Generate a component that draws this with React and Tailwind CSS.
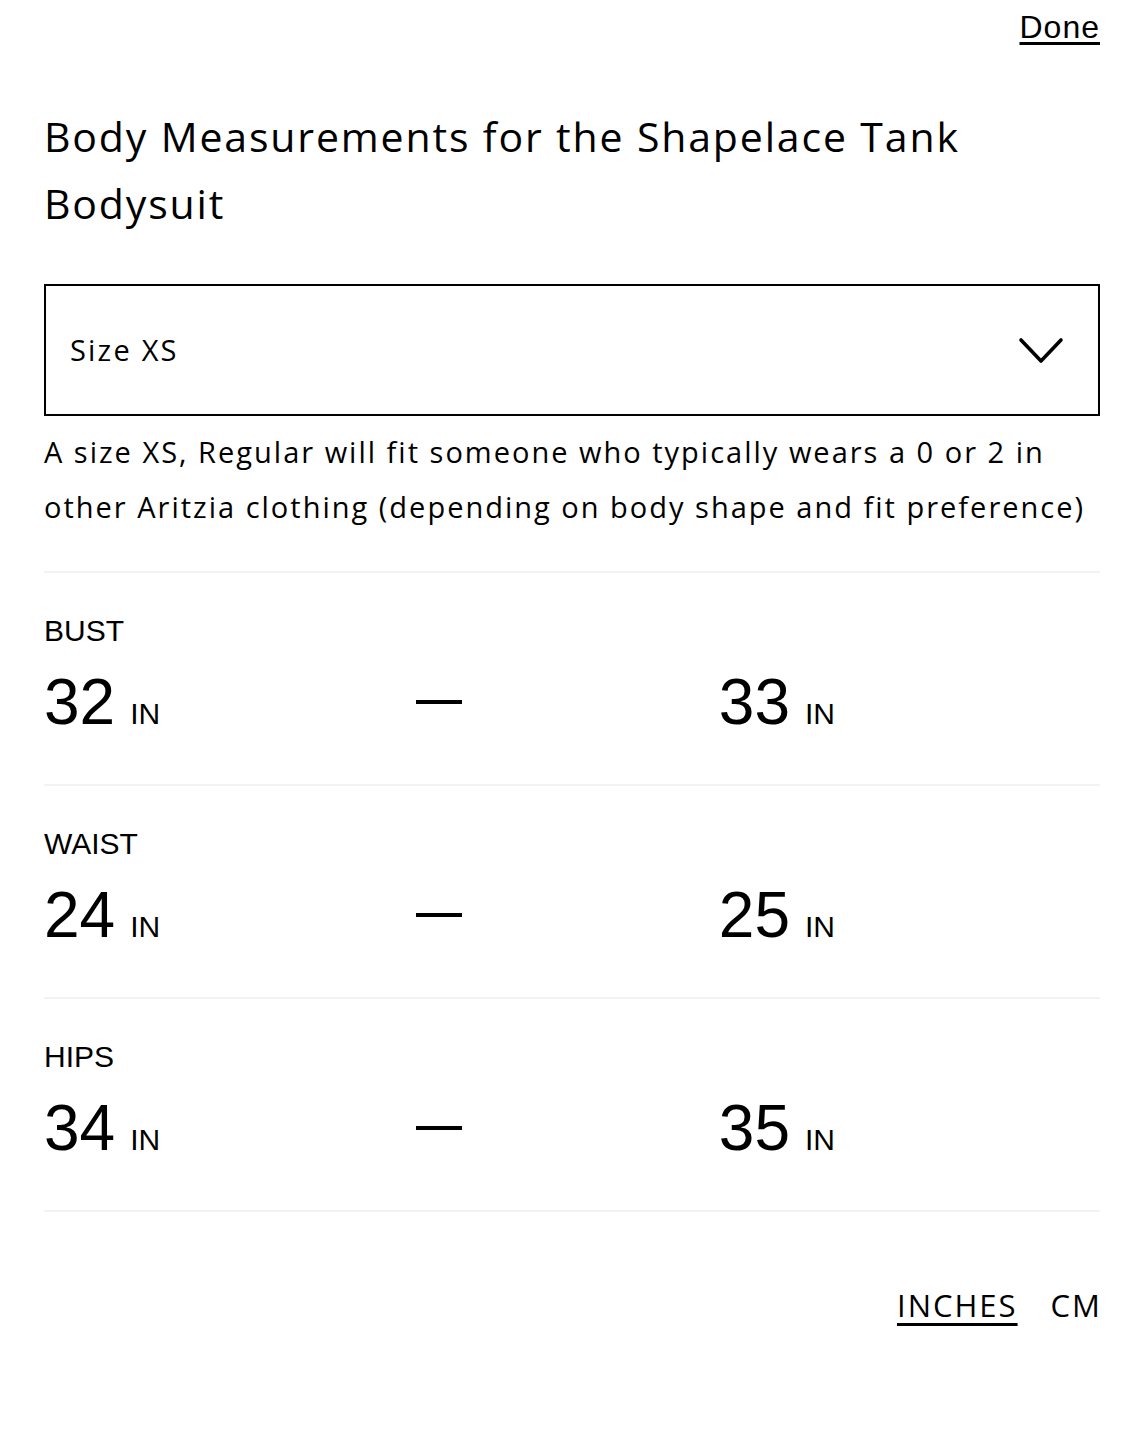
const rows = [
  { label: "BUST", from: 32, to: 33 },
  { label: "WAIST", from: 24, to: 25 },
  { label: "HIPS", from: 34, to: 35 },
];

const geo = { fontFamily: "'Open Sans', Lato, sans-serif" };
const grotesk = { fontFamily: "'Liberation Sans', Arial, sans-serif" };

function Measure({ value }) {
  return (
    <span className="inline-flex items-baseline text-black">
      <span className="text-[64px] leading-none">{value}</span>
      <span className="ml-[15px] text-[30px] leading-none">IN</span>
    </span>
  );
}

function Chevron() {
  return (
    <svg width="46" height="28" viewBox="0 0 46 28" fill="none" stroke="black" strokeWidth="3.6" strokeLinecap="round" strokeLinejoin="round">
      <polyline points="3,4 23,25 43,4" />
    </svg>
  );
}

export default function App() {
  return (
    <div className="w-[1144px] min-h-[1440px] bg-white px-[44px] text-black">
      <div className="flex justify-end pt-[7px]" style={grotesk}>
        <button className="text-[32px] leading-[40px] tracking-[1px] underline underline-offset-[4px] decoration-[3px] text-black">
          Done
        </button>
      </div>

      <h2 className="mt-[56px] text-[41px] leading-[67px] tracking-[1.85px] font-normal" style={geo}>
        Body Measurements for the Shapelace Tank Bodysuit
      </h2>

      <div
        className="mt-[47px] flex h-[132px] items-center justify-between border-2 border-black pl-[24px] pr-[34px]"
        style={geo}
      >
        <span className="text-[29px] tracking-[2.2px]">Size XS</span>
        <Chevron />
      </div>

      <p className="mt-[8px] text-[29px] leading-[55px] tracking-[2px]" style={geo}>
        A size XS, Regular will fit someone who typically wears a 0 or 2 in other Aritzia clothing
        (depending on body shape and fit preference)
      </p>

      <div className="mt-[37px] border-t-2 border-[#f2f2f2]" />

      <div style={grotesk}>
        {rows.map((r) => (
          <div key={r.label} className="border-b-2 border-[#f2f2f2] pt-[41px] pb-[50px]">
            <div className="text-[30px] leading-[34px]">{r.label}</div>
            <div className="mt-[22px] flex h-[64px] items-center">
              <div className="w-[372px]">
                <Measure value={r.from} />
              </div>
              <div className="h-[4px] w-[46px] bg-black" />
              <div className="w-[373px] text-right">
                <Measure value={r.to} />
              </div>
            </div>
          </div>
        ))}
      </div>

      <div className="mt-[70px] flex items-baseline justify-end text-[31px]" style={geo}>
        <button className="tracking-[2px] underline underline-offset-[6px] decoration-[3px]">INCHES</button>
        <button className="ml-[33px] -mr-[2px] tracking-[2px]">CM</button>
      </div>
    </div>
  );
}
